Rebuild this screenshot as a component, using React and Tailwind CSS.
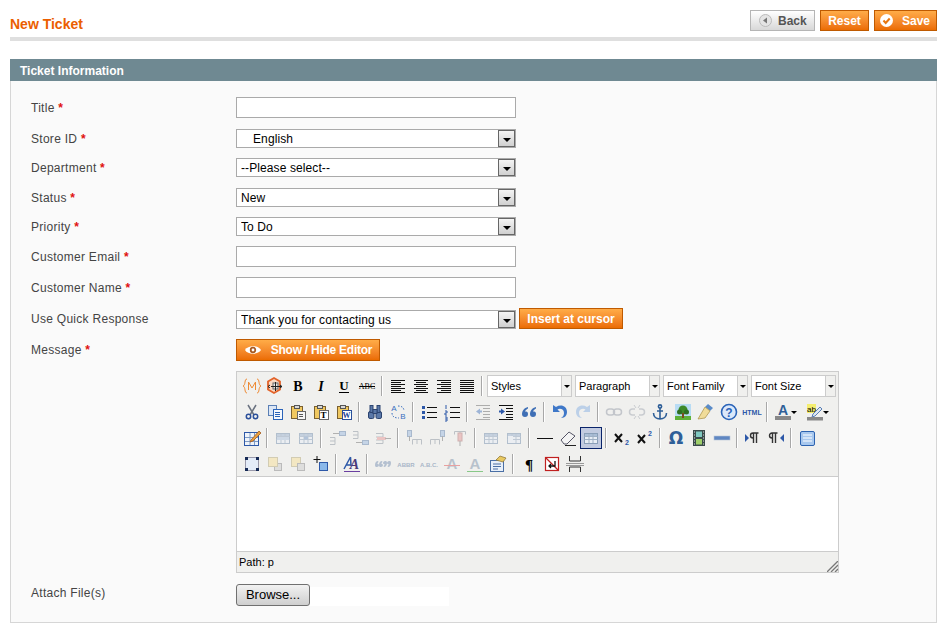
import React from 'react'

const FONT = "font-['Liberation_Sans',Arial,sans-serif]"

const Lines = ({ rows, color = '#111' }) => (
  <path d={rows.map(([a, b, y]) => `M${a} ${y + 0.5}H${b}`).join('')} stroke={color} fill="none" />
)
const Txt = ({ x = 10, y = 14, s = 12, c = '#000', w = 700, f = 'Liberation Sans', i, children }) => (
  <text x={x} y={y} fontSize={s} fill={c} fontWeight={w} fontFamily={f} fontStyle={i ? 'italic' : 'normal'} textAnchor="middle">{children}</text>
)
const Sheet = ({ x, y, w, h, fill = '#dbe6f5', stroke = '#5a7fb5' }) => (
  <rect x={x + 0.5} y={y + 0.5} width={w} height={h} fill={fill} stroke={stroke} />
)
const Clip = ({ children }) => (
  <>
    <rect x="3.5" y="4.5" width="11" height="12" fill="#f0c860" stroke="#7a6030" />
    <rect x="6.5" y="3.5" width="5" height="3" fill="#d8d8d8" stroke="#555" />
    {children}
  </>
)
const Grid = ({ op = 1 }) => (
  <g opacity={op}>
    <rect x="3.5" y="5.5" width="13" height="10" fill="#e8eef5" stroke="#8a9fb8" />
    <rect x="4" y="6" width="12" height="2" fill="#a9bdd6" />
    <path d="M3.5 8.5h13M3.5 11.5h13M8 6v9M12 6v9" stroke="#9fb0c5" fill="none" />
  </g>
)

// one drawing per toolbar button, on a 20x20 box
const ICONS = {
  widget: (
    <g fill="none" stroke="#ee8a34" strokeWidth="1">
      <path d="M5 3C2 3 4 9 1 10c3 1 1 7 4 7M15 3c3 0 1 6 4 7-3 1-1 7-4 7" />
      <path d="M6.500 14V6l3.500 6 3.500-6v8" />
    </g>
  ),
  magento: (
    <g>
      <path d="M9 2l6 3.500v8L9 17 3 13.500v-8z" fill="#fbd9c4" stroke="#e2632a" strokeWidth="1.800" />
      <rect x="8" y="7" width="5" height="6" fill="#e8e8e8" stroke="#666" />
      <path d="M6 10.500h11M10.500 6v9M15 9l2 1.500-2 1.500M5 9l-2 1.500 2 1.500" stroke="#222" fill="none" />
    </g>
  ),
  bold: <Txt f="Liberation Serif" s={14} y={15} w={900}>B</Txt>,
  italic: <Txt f="Liberation Serif" s={14} y={15} i>I</Txt>,
  underline: (
    <>
      <Txt f="Liberation Serif" s={13} y={14}>U</Txt>
      <path d="M5 16.500h10" stroke="#000" />
    </>
  ),
  strike: (
    <>
      <Txt f="Liberation Serif" s={8} y={13} w={400}>ABC</Txt>
      <path d="M2 10.500h16" stroke="#000" />
    </>
  ),
  left: <Lines rows={[[3, 17, 4], [3, 13, 6], [3, 17, 8], [3, 13, 10], [3, 17, 12], [3, 13, 14], [3, 17, 16]]} />,
  center: <Lines rows={[[3, 17, 4], [5, 15, 6], [3, 17, 8], [5, 15, 10], [3, 17, 12], [5, 15, 14], [3, 17, 16]]} />,
  right: <Lines rows={[[3, 17, 4], [7, 17, 6], [3, 17, 8], [7, 17, 10], [3, 17, 12], [7, 17, 14], [3, 17, 16]]} />,
  justify: <Lines rows={[[3, 17, 4], [3, 17, 6], [3, 17, 8], [3, 17, 10], [3, 17, 12], [3, 17, 14], [3, 17, 16]]} />,
  cut: (
    <g fill="none">
      <path d="M6 3l6 10M14 3L8 13" stroke="#6a7280" strokeWidth="1.500" />
      <circle cx="6.500" cy="14.500" r="2.200" stroke="#2a4f9a" strokeWidth="1.500" />
      <circle cx="13.500" cy="14.500" r="2.200" stroke="#2a4f9a" strokeWidth="1.500" />
    </g>
  ),
  copy: (
    <>
      <Sheet x={3} y={3} w={8} h={10} />
      <Sheet x={8} y={7} w={9} h={10} fill="#f4f8fd" stroke="#2a63b8" />
      <path d="M10 10.500h5M10 12.500h5M10 14.500h5" stroke="#2a63b8" />
    </>
  ),
  paste: (
    <Clip>
      <Sheet x={9} y={9} w={8} h={8} fill="#f6f6f6" stroke="#666" />
      <path d="M11 12.500h4M11 14.500h4" stroke="#555" />
    </Clip>
  ),
  pastetext: (
    <Clip>
      <Sheet x={8} y={8} w={9} h={9} fill="#fff" stroke="#666" />
      <Txt x={12.500} y={16} s={9} f="Liberation Serif">T</Txt>
    </Clip>
  ),
  pasteword: (
    <Clip>
      <Sheet x={8} y={8} w={9} h={9} fill="#fff" stroke="#2a4f9a" />
      <Txt x={12.500} y={16} s={8} f="Liberation Serif" c="#1c3f94">W</Txt>
    </Clip>
  ),
  find: (
    <g fill="#5a78a8" stroke="#2c4470">
      <rect x="3.500" y="9.500" width="5.500" height="7" rx="1.500" />
      <rect x="11" y="9.500" width="5.500" height="7" rx="1.500" />
      <rect x="5" y="3.500" width="3" height="7" />
      <rect x="12" y="3.500" width="3" height="7" />
      <rect x="8" y="7.500" width="4" height="4" />
    </g>
  ),
  replace: (
    <>
      <Txt x={6} y={9} s={8} w={400} c="#3a6fc0">A</Txt>
      <Txt x={15} y={17} s={8} w={400} c="#3a6fc0">B</Txt>
      <path d="M4 11c0 4 3 5 7 5M10 4c3 0 6 1 6 5" stroke="#3a6fc0" strokeDasharray="1.500 1.500" fill="none" />
    </>
  ),
  bullist: (
    <>
      <Lines rows={[[8, 18, 5], [8, 18, 10], [8, 18, 15]]} />
      <path d="M3 4h3v3H3zM3 9h3v3H3zM3 14h3v3H3z" fill="#2d58a8" />
    </>
  ),
  numlist: (
    <>
      <Lines rows={[[8, 18, 5], [8, 18, 10], [8, 18, 15]]} />
      <path d="M4 3v4M3 9h2v2H3v2h2M3 15h2v4H3M3 17h2" stroke="#2d58a8" fill="none" />
    </>
  ),
  outdent: (
    <g opacity=".55">
      <Lines color="#777" rows={[[3, 17, 3], [10, 17, 6], [10, 17, 9], [10, 17, 12], [10, 17, 15], [3, 17, 17]]} />
      <path d="M3 9.500l4-3v2h2v2H7v2z" fill="#5b84c4" />
    </g>
  ),
  indent: (
    <>
      <Lines rows={[[3, 17, 3], [10, 17, 6], [10, 17, 9], [10, 17, 12], [10, 17, 15], [3, 17, 17]]} />
      <path d="M9 9.500l-4-3v2H3v2h2v2z" fill="#2d58a8" />
    </>
  ),
  quote: <path d="M9 5C5 6 3 9 3 12c0 2 1 3 3 3s3-1 3-3-1-2.500-3-2.500C6.500 8 8 7 9 6.500zM17 5c-4 1-6 4-6 7 0 2 1 3 3 3s3-1 3-3-1-2.500-3-2.500c.5-1.500 2-2.500 3-3z" fill="#3f6fb5" />,
  undo: <path d="M3 3v7h7L7.500 7.500C10 6 14 7 14 11c0 2-1 4-3 5 4 0 6-3 6-6 0-6-6-8-11-5z" fill="#3f78c8" />,
  redo: <path d="M17 3v7h-7l2.500-2.500C10 6 6 7 6 11c0 2 1 4 3 5-4 0-6-3-6-6 0-6 6-8 11-5z" fill="#bcd0e8" />,
  link: (
    <g fill="none" stroke="#c3c6cb" strokeWidth="1.500">
      <rect x="2.500" y="7" width="8" height="6" rx="3" />
      <rect x="9.500" y="7" width="8" height="6" rx="3" />
    </g>
  ),
  unlink: (
    <g fill="none" stroke="#c9ccd0" strokeWidth="1.500">
      <path d="M8 7H5.500a3 3 0 000 6H8M12 7h2.500a3 3 0 010 6H12" />
      <path d="M7 3l2 3M13 3l-2 3M7 17l2-3M13 17l-2-3" strokeWidth="1" />
    </g>
  ),
  anchor: (
    <g fill="none" stroke="#2f5f98" strokeWidth="1.600">
      <circle cx="10" cy="4.500" r="1.600" />
      <path d="M10 6v11M7 9h6M3.500 11c0 4 3 6 6.500 6s6.500-2 6.500-6" />
    </g>
  ),
  image: (
    <>
      <rect x="2" y="2" width="16" height="16" fill="#b8dcf4" />
      <rect x="2" y="14" width="16" height="4" fill="#5fb038" />
      <circle cx="10" cy="8" r="4.500" fill="#3d8a2a" />
      <circle cx="6.500" cy="10" r="2.500" fill="#2e7022" />
      <circle cx="13.500" cy="10" r="2.500" fill="#2e7022" />
      <rect x="9" y="11" width="2" height="5" fill="#7a4a20" />
    </>
  ),
  cleanup: (
    <>
      <path d="M12 2l5 4-3 3-5-4z" fill="#5a8bc8" />
      <path d="M9 5l5 4-5 7-7 1z" fill="#f0dc9a" stroke="#b09850" strokeWidth=".8" />
    </>
  ),
  help: (
    <>
      <circle cx="10" cy="10" r="7.500" fill="#dbe8fa" stroke="#2a63b8" strokeWidth="1.600" />
      <Txt y={14.500} s={12} c="#2a63b8">?</Txt>
    </>
  ),
  html: <Txt y={13} s={7} c="#2d58a8">HTML</Txt>,
  forecolor: (
    <>
      <Txt y={13} s={14} c="#2f5f98">A</Txt>
      <rect x="2" y="14" width="16" height="4" fill="#888" />
    </>
  ),
  backcolor: (
    <>
      <rect x="2" y="2" width="9" height="9" fill="#f4ee70" />
      <Txt x={6.500} y={9.500} s={8} w={400}>ab</Txt>
      <path d="M8 12l7-7 2 2-7 7-3 1z" fill="#dfe8f2" stroke="#5a7fb5" />
      <rect x="2" y="15" width="16" height="3.500" fill="#888" />
    </>
  ),
  tableedit: (
    <>
      <rect x="2.500" y="4.500" width="14" height="13" fill="#eef3fa" stroke="#2d58a8" />
      <path d="M3 9.500h13M3 13.500h13M8 5v12M12.500 5v12" stroke="#7f9bc4" />
      <path d="M9 12l8-9 2 2-8 8-3 1z" fill="#e8a040" stroke="#a35a20" strokeWidth=".8" />
    </>
  ),
  rowprops: (
    <g opacity=".6">
      <Grid />
      <rect x="4" y="9" width="12" height="3" fill="#b9cbe2" />
    </g>
  ),
  cellprops: (
    <g opacity=".6">
      <Grid />
      <rect x="8" y="8.500" width="4" height="3" fill="#8aa6cc" />
    </g>
  ),
  rowbefore: (
    <g opacity=".6">
      <path d="M3 9.500h5v7H3M3 13h5" fill="none" stroke="#9ba3ad" />
      <rect x="12.500" y="3.500" width="6" height="4" fill="#a9c3e2" stroke="#7b96b8" />
      <path d="M6 5.500h6" stroke="#888" />
    </g>
  ),
  rowafter: (
    <g opacity=".6">
      <path d="M3 3.500h5v7H3M3 7h5" fill="none" stroke="#9ba3ad" />
      <rect x="12.500" y="12.500" width="6" height="4" fill="#a9c3e2" stroke="#7b96b8" />
      <path d="M6 14.500h6" stroke="#888" />
    </g>
  ),
  rowdelete: (
    <g opacity=".6">
      <path d="M3 5.500h7v10H3M3 9h7M3 12h7" fill="none" stroke="#9ba3ad" />
      <rect x="4" y="9" width="9" height="3" fill="#e8a8a8" />
      <path d="M12 10.500h6" stroke="#888" />
    </g>
  ),
  colbefore: (
    <g opacity=".6">
      <rect x="3.500" y="2.500" width="4" height="6" fill="#a9c3e2" stroke="#7b96b8" />
      <path d="M5.500 8v5" stroke="#888" />
      <path d="M8.500 16.500v-5h9v5M13 12v4" fill="none" stroke="#9ba3ad" />
    </g>
  ),
  colafter: (
    <g opacity=".6">
      <rect x="13.500" y="2.500" width="4" height="6" fill="#a9c3e2" stroke="#7b96b8" />
      <path d="M15.500 8v5" stroke="#888" />
      <path d="M3.500 16.500v-5h9v5M8 12v4" fill="none" stroke="#9ba3ad" />
    </g>
  ),
  coldelete: (
    <g opacity=".6">
      <path d="M4.500 6.500v-3h11v3M10 4v3" fill="none" stroke="#9ba3ad" />
      <rect x="8" y="5" width="4" height="8" fill="#e8a8a8" stroke="#b88" />
      <path d="M10 13v5" stroke="#888" />
    </g>
  ),
  splitcells: <Grid op={0.6} />,
  mergecells: (
    <g opacity=".6">
      <Grid />
      <rect x="4" y="8" width="5" height="7" fill="#e8eef5" />
    </g>
  ),
  hr: <path d="M2 10.500h16" stroke="#111" />,
  eraser: (
    <>
      <path d="M3 12l8-8 6 4-8 8H6z" fill="#f4f4f4" stroke="#556" />
      <path d="M7 17.500h11" stroke="#222" />
    </>
  ),
  visualaid: <Grid />,
  sub: (
    <>
      <path d="M3 6l7 8M10 6l-7 8" stroke="#111" strokeWidth="2" />
      <Txt x={15} y={17} s={7} c="#2d58a8">2</Txt>
    </>
  ),
  sup: (
    <>
      <path d="M3 7l7 8M10 7l-7 8" stroke="#111" strokeWidth="2" />
      <Txt x={15} y={8} s={7} c="#2d58a8">2</Txt>
    </>
  ),
  charmap: <Txt y={16} s={17} c="#2f5f98" f="DejaVu Sans">Ω</Txt>,
  media: (
    <>
      <rect x="4" y="2" width="12" height="16" fill="#3a4a4a" />
      <rect x="7" y="3.500" width="6" height="5.500" fill="#7fc8c0" />
      <rect x="7" y="11" width="6" height="5.500" fill="#9fd06a" />
      <path d="M5 4h1M5 7h1M5 10h1M5 13h1M5 16h1M14 4h1M14 7h1M14 10h1M14 13h1M14 16h1" stroke="#ddd" />
    </>
  ),
  advhr: <rect x="2" y="8" width="16" height="4" fill="#5f87c2" stroke="#b8c6d8" strokeWidth=".6" />,
  ltr: (
    <>
      <path d="M2 6l4 4-4 4z" fill="#2d58a8" />
      <path d="M10.500 15V5M13.500 15V5M15.500 5H10a2.500 2.500 0 000 5h1" stroke="#333" strokeWidth="1.400" fill="none" />
    </>
  ),
  rtl: (
    <>
      <path d="M18 6l-4 4 4 4z" fill="#2d58a8" />
      <path d="M6.500 15V5M9.500 15V5M11.500 5H6a2.500 2.500 0 000 5h1" stroke="#333" strokeWidth="1.400" fill="none" />
    </>
  ),
  fullscreen: (
    <>
      <rect x="3.500" y="3.500" width="14" height="14" rx="1.500" fill="#a8c8ee" stroke="#2d63b0" />
      <path d="M6 7h9M6 10h9M6 13h9" stroke="#fff" strokeWidth="1.200" />
    </>
  ),
  layer: (
    <>
      <rect x="3.500" y="3.500" width="13" height="13" fill="#e4ecf8" stroke="#99a" />
      <path d="M3 3h3v3H3zM14 3h3v3h-3zM3 14h3v3H3zM14 14h3v3h-3z" fill="#162a55" />
    </>
  ),
  forward: (
    <g opacity=".75">
      <rect x="9.500" y="9.500" width="7" height="7" fill="#d8d8d8" stroke="#aaa" />
      <rect x="3.500" y="3.500" width="9" height="9" fill="#f4e4b4" stroke="#c8c0a0" />
    </g>
  ),
  backward: (
    <g opacity=".75">
      <rect x="3.500" y="3.500" width="9" height="9" fill="#f4e4b4" stroke="#c8c0a0" />
      <rect x="9.500" y="9.500" width="7" height="7" fill="#d8d8d8" stroke="#aaa" />
    </g>
  ),
  absolute: (
    <>
      <path d="M6 2v7M2.500 5.500h7" stroke="#111" />
      <rect x="8.500" y="8.500" width="8" height="8" fill="#8ab8ea" stroke="#2d58a8" />
    </>
  ),
  styleprops: (
    <>
      <path d="M2 15L8.500 3M8.500 3L9 12M4.500 11h4" fill="none" stroke="#2d58a8" strokeWidth="1.500" />
      <Txt x={12.500} y={15} s={14} c="#4a3a7a" i f="Liberation Serif">A</Txt>
      <path d="M2 17.500h16" stroke="#6a3fa0" />
    </>
  ),
  cite: <path d="M5 7C3 7 2 9 2 11s1 2 2 2 2-1 2-2-1-1-1.500-1c0-1 .5-2 1-2zM9 7c-2 0-3 2-3 4s1 2 2 2 2-1 2-2-1-1-1.500-1c0-1 .5-2 1-2zM11 13c2 0 3-2 3-4s-1-2-2-2-2 1-2 2 1 1 1.500 1c0 1-.5 2-1 2zM15 13c2 0 3-2 3-4s-1-2-2-2-2 1-2 2 1 1 1.500 1c0 1-.5 2-1 2z" fill="#b4c0d0" />,
  abbr: <Txt y={13} s={6} c="#a8b6c8">ABBR</Txt>,
  acronym: <Txt y={13} s={6} c="#a8b6c8">A.B.C.</Txt>,
  del: (
    <>
      <Txt y={15} s={15} c="#b8c2cc">A</Txt>
      <path d="M2 11.500h16" stroke="#e8a0a0" />
    </>
  ),
  ins: (
    <>
      <Txt y={15} s={15} c="#b8c2cc">A</Txt>
      <path d="M2 17.500h16" stroke="#88c888" />
    </>
  ),
  attribs: (
    <>
      <rect x="2.500" y="6.500" width="13" height="11" fill="#e8f0fa" stroke="#4a6fa5" />
      <path d="M5 10h8M5 12.500h8M5 15h5" stroke="#4a6fa5" />
      <path d="M8 6l4-4 6 2-3 4z" fill="#e8c860" stroke="#8a7030" strokeWidth=".7" />
    </>
  ),
  para: <Txt y={16} s={15} f="Liberation Serif">¶</Txt>,
  nonbreak: (
    <>
      <rect x="3.500" y="3.500" width="13" height="13" fill="#fff" stroke="#c02020" strokeWidth="1.200" />
      <path d="M3.500 3.500l13 13" stroke="#c02020" strokeWidth="1.200" />
      <path d="M13 7v5H7M9 10l-2 2 2 2" stroke="#111" strokeWidth="1.300" fill="none" />
    </>
  ),
  pagebreak: (
    <>
      <path d="M4.500 2v5h11V2M4.500 18v-5h11v5" stroke="#333" fill="none" />
      <path d="M1 9.500h18M1 11.500h18" stroke="#999" />
    </>
  ),
}

const ROW2 = ['cut', 'copy', 'paste', 'pastetext', 'pasteword', '|', 'find', 'replace', '|', 'bullist', 'numlist', '|', 'outdent', 'indent', 'quote', '|', 'undo', 'redo', '|', 'link', 'unlink', 'anchor', 'image', 'cleanup', 'help', 'html', '|', 'forecolor', 'v', 'backcolor', 'v']
const ROW3 = ['tableedit', '|', 'rowprops', 'cellprops', '|', 'rowbefore', 'rowafter', 'rowdelete', '|', 'colbefore', 'colafter', 'coldelete', '|', 'splitcells', 'mergecells', '|', 'hr', 'eraser', 'visualaid', '|', 'sub', 'sup', '|', 'charmap', 'media', 'advhr', '|', 'ltr', 'rtl', '|', 'fullscreen']
const ROW4 = ['layer', 'forward', 'backward', 'absolute', '|', 'styleprops', '|', 'cite', 'abbr', 'acronym', 'del', 'ins', 'attribs', '|', 'para', 'nonbreak', 'pagebreak']

function ToolItem({ name }) {
  if (name === '|') {
    return (
      <span className="flex w-[8px] h-[20px] justify-center shrink-0">
        <span className="w-px h-full bg-[#a8a8a8] border-r border-white box-content" />
      </span>
    )
  }
  if (name === 'v') {
    return (
      <span className="flex w-[9px] h-[20px] -ml-[3px] mr-[3px] items-center shrink-0">
        <span className="w-0 h-0 border-x-[3px] border-x-transparent border-t-[3px] border-t-black" />
      </span>
    )
  }
  const active = name === 'visualaid'
  return (
    <span className="flex w-[23px] h-[22px] items-center justify-center shrink-0">
      <span className={`flex w-[22px] h-[22px] items-center justify-center border ${active ? 'border-[#0a246a] bg-[#c2cbe0]' : 'border-transparent'}`}>
        <svg width="20" height="20" viewBox="0 0 20 20">{ICONS[name]}</svg>
      </span>
    </span>
  )
}

function ToolRow({ items, children }) {
  return (
    <div className="flex h-[26px] items-center pl-[3px]">
      {items.map((name, i) => <ToolItem key={i} name={name} />)}
      {children}
    </div>
  )
}

function EditorSelect({ label }) {
  return (
    <div className="flex w-[85px] h-[22px] border border-[#ccc] bg-white mr-[3px] shrink-0">
      <span className="flex-1 pl-[3px] text-[11px] leading-[20px] text-black">{label}</span>
      <span className="flex w-[10px] items-center justify-center bg-[#f0f0ee] border-l border-[#ccc]">
        <span className="w-0 h-0 border-x-[3px] border-x-transparent border-t-[3px] border-t-black" />
      </span>
    </div>
  )
}

function OrangeButton({ children, className = '' }) {
  return (
    <button type="button" className={`flex items-center justify-center border border-[#bf5a00] bg-gradient-to-b from-[#ffac47] to-[#eb6c00] text-[12px] font-bold text-white ${className}`}>
      {children}
    </button>
  )
}

function Field({ label, required, className = '', labelClass = '', children }) {
  return (
    <div className={`flex items-center ${className}`}>
      <label className={`w-[205px] shrink-0 text-[12px] tracking-[0.28px] text-[#444] ${labelClass}`}>
        {label}
        {required && <span className="text-[#e01010] font-bold"> *</span>}
      </label>
      {children}
    </div>
  )
}

function TextInput() {
  return <input type="text" className="block w-[280px] h-[21px] border border-[#aaa] bg-white outline-none" />
}

function SelectBox({ value, className = '', indent }) {
  return (
    <div className={`relative w-[280px] h-[19px] ${className}`}>
      <select defaultValue={value} className={`block w-full h-full appearance-none border border-[#aaa] bg-white text-[12px] tracking-[0.1px] text-black outline-none ${indent ? 'pl-[16px]' : 'pl-[4px]'}`}>
        <option>{value}</option>
      </select>
      <span className="absolute right-[1px] top-[1px] flex w-[17px] h-[17px] items-center justify-center border border-[#666] bg-gradient-to-b from-[#f4f4f4] to-[#d0d0d0] pointer-events-none">
        <span className="w-0 h-0 mt-[2px] border-x-[4px] border-x-transparent border-t-[4px] border-t-black" />
      </span>
    </div>
  )
}

export default function App() {
  return (
    <div className={`${FONT} min-h-[633px] bg-white px-[10px] pt-[10px] text-[12px]`}>
      <div className="flex items-start justify-between border-b-4 border-[#dfdfdf] pb-[6px]">
        <h3 className="h-[21px] text-[14px] font-bold text-[#eb5e00] leading-[28px]">New Ticket</h3>
        <div className="flex gap-[5px]">
          <button type="button" className="flex w-[65px] h-[21px] items-center pl-[8px] gap-[6px] border border-[#b5b5b5] bg-gradient-to-b from-white to-[#d8d8d8] text-[12px] font-bold text-[#555]">
            <svg width="13" height="13" viewBox="0 0 13 13">
              <circle cx="6.500" cy="6.500" r="6" fill="#e4e4e4" stroke="#bbb" />
              <path d="M4 6.500l4-3v6z" fill="#777" />
            </svg>
            Back
          </button>
          <OrangeButton className="w-[49px] h-[21px]">Reset</OrangeButton>
          <OrangeButton className="w-[63px] h-[21px] gap-[9px] pr-[1px]">
            <svg width="13" height="13" viewBox="0 0 13 13">
              <circle cx="6.500" cy="6.500" r="6.500" fill="#fff" />
              <path d="M3.500 6.500l2.200 2.500 4-4.500" fill="none" stroke="#e8770f" strokeWidth="2" />
            </svg>
            Save
          </OrangeButton>
        </div>
      </div>

      <div className="mt-[18px] h-[22px] bg-[#6f8992] pl-[10px] text-[12px] font-bold leading-[24px] text-white">Ticket Information</div>

      <div className="h-[542px] border border-t-0 border-[#d6d6d6] bg-[#fafafa] pl-[20px] pt-[16px]">
        <Field label="Title" required><TextInput /></Field>
        <Field label="Store ID" required className="mt-[11px]"><SelectBox value="English" indent /></Field>
        <Field label="Department" required className="mt-[10px]"><SelectBox value="--Please select--" /></Field>
        <Field label="Status" required className="mt-[11px]"><SelectBox value="New" /></Field>
        <Field label="Priority" required className="mt-[10px]"><SelectBox value="To Do" /></Field>
        <Field label="Customer Email" required className="mt-[10px]"><TextInput /></Field>
        <Field label="Customer Name" required className="mt-[10px]"><TextInput /></Field>
        <Field label="Use Quick Response" className="mt-[10px]">
          <div className="flex items-end gap-[3px]">
            <SelectBox value="Thank you for contacting us" />
            <OrangeButton className="w-[104px] h-[21px]">Insert at cursor</OrangeButton>
          </div>
        </Field>
        <Field label="Message" required className="mt-[10px]">
          <OrangeButton className="w-[144px] h-[22px] gap-[9px] tracking-[-0.25px]">
            <svg width="18" height="12" viewBox="0 0 18 12">
              <path d="M1 6c3-5 13-5 16 0-3 5-13 5-16 0z" fill="#fff" />
              <circle cx="9" cy="6" r="3.200" fill="#a85a20" />
              <circle cx="9" cy="6" r="1.400" fill="#fff" />
            </svg>
            Show / Hide Editor
          </OrangeButton>
        </Field>

        <div className="ml-[205px] mt-[10px] w-[603px] h-[202px] border border-[#ccc] flex flex-col">
          <div className="h-[105px] bg-[#f0f0ee] border-b border-[#ccc] pt-px">
            <ToolRow items={['widget', 'magento', 'bold', 'italic', 'underline', 'strike', '|', 'left', 'center', 'right', 'justify', '|']}>
              <span className="flex ml-[1px]">
                <EditorSelect label="Styles" />
                <EditorSelect label="Paragraph" />
                <EditorSelect label="Font Family" />
                <EditorSelect label="Font Size" />
              </span>
            </ToolRow>
            <ToolRow items={ROW2} />
            <ToolRow items={ROW3} />
            <ToolRow items={ROW4} />
          </div>
          <div className="flex-1 bg-white" />
          <div className="relative h-[21px] bg-[#f0f0ee] border-t border-[#ccc] pl-[2px] text-[11px] leading-[20px] text-black">
            Path: p
            <svg className="absolute right-0 bottom-0" width="11" height="11" viewBox="0 0 11 11">
              <path d="M0 11L11 0M4 11l7-7M8 11l3-3" stroke="#777" strokeWidth="1.300" fill="none" />
            </svg>
          </div>
        </div>

        <Field label="Attach File(s)" className="mt-[11px]" labelClass="-mt-[5px]">
          <div className="flex items-end">
            <button type="button" className="w-[74px] h-[22px] rounded-[3px] border border-[#707070] bg-gradient-to-b from-[#f2f2f2] to-[#cfcfcf] text-[13px] text-black">Browse...</button>
            <div className="w-[139px] h-[19px] bg-white" />
          </div>
        </Field>
      </div>
    </div>
  )
}
